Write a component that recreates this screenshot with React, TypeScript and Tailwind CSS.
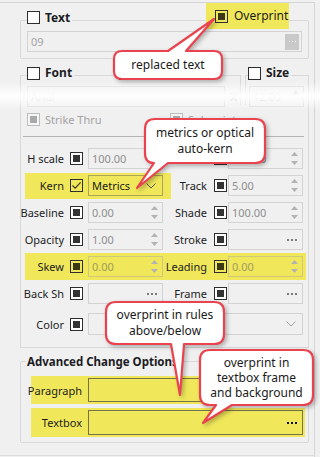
import React from 'react';

type CkKind = 'empty' | 'ind' | 'check' | 'off';

function Ck({ kind = 'ind', yellow = false }: { kind?: CkKind; yellow?: boolean }) {
  if (kind === 'off') {
    return (
      <span className="w-[13px] h-[13px] shrink-0 border border-[#bdbdbd] bg-[#f6f6f6] flex items-center justify-center">
        <span className="w-[7px] h-[7px] bg-[#a9a9a9]" />
      </span>
    );
  }
  return (
    <span
      className={`w-[13px] h-[13px] shrink-0 border border-[#2e2e2e] flex items-center justify-center ${
        yellow ? 'bg-[#f0e85a]' : 'bg-white'
      }`}
    >
      {kind === 'ind' && <span className={`w-[7px] h-[7px] ${yellow ? 'bg-[#3b3817]' : 'bg-[#333333]'}`} />}
      {kind === 'check' && (
        <svg width="11" height="11" viewBox="0 0 11 11">
          <path d="M1.5 5.5 L4.2 8.2 L9.6 2.4" stroke="#3a3714" strokeWidth="1.2" fill="none" />
        </svg>
      )}
    </span>
  );
}

function Spin() {
  return (
    <span className="ml-auto mr-[4px] flex flex-col gap-[5px]">
      <svg width="7" height="4" viewBox="0 0 7 4">
        <path d="M0 4 L3.5 0 L7 4 Z" fill="#b3b3b3" />
      </svg>
      <svg width="7" height="4" viewBox="0 0 7 4">
        <path d="M0 0 L3.5 4 L7 0 Z" fill="#b3b3b3" />
      </svg>
    </span>
  );
}

function Dots({ dark = false }: { dark?: boolean }) {
  const c = dark ? 'bg-[#111111]' : 'bg-[#7a7a7a]';
  return (
    <span className="ml-auto mr-[5px] flex gap-[2px]">
      <span className={`w-[2px] h-[2px] ${c}`} />
      <span className={`w-[2px] h-[2px] ${c}`} />
      <span className={`w-[2px] h-[2px] ${c}`} />
    </span>
  );
}

function Chev({ dark = false }: { dark?: boolean }) {
  return (
    <svg className="ml-auto mr-[6px]" width="10" height="6" viewBox="0 0 10 6">
      <path d="M0.5 0.5 L5 5 L9.5 0.5" stroke={dark ? '#555' : '#a5a5a5'} strokeWidth="1" fill="none" />
    </svg>
  );
}

// right aligned label; long words spill to the left like the WinForms labels
function Lbl({ w, children }: { w: string; children: React.ReactNode }) {
  return <span className={`${w} shrink-0 flex justify-end whitespace-nowrap leading-none`}>{children}</span>;
}

type FieldProps = {
  value?: string;
  w: string;
  h?: string;
  yellow?: boolean;
  spin?: boolean;
  dots?: boolean;
  chev?: boolean;
};

function Field({ value, w, h = 'h-[21px]', yellow = false, spin, dots, chev }: FieldProps) {
  return (
    <div
      className={`${w} ${h} shrink-0 border flex items-center pl-[3px] ${
        yellow ? 'border-[#cfc87c] bg-[#f0e85a] text-[#a19b5e]' : 'border-[#d3d3d3] bg-[#f0f0f0] text-[#8e8e8e]'
      }`}
    >
      <span className="leading-none">{value}</span>
      {spin && <Spin />}
      {dots && <Dots />}
      {chev && <Chev />}
    </div>
  );
}

type Side = { label: string; value?: string; spin?: boolean; dots?: boolean };

function Row({ l, r, hl }: { l: Side; r: Side; hl?: boolean }) {
  return (
    <div className={`ml-[4px] w-[281px] h-[27px] flex items-center ${hl ? 'bg-[#f0e85a]' : ''}`}>
      <div className="w-[146px] flex items-center">
        <Lbl w="w-[39px]">{l.label}</Lbl>
        <span className="ml-[6px]">
          <Ck yellow={hl} />
        </span>
        <span className="ml-[5px]">
          <Field w="w-[75px]" value={l.value} spin={l.spin} dots={l.dots} yellow={hl} />
        </span>
      </div>
      <div className="flex items-center">
        <Lbl w="w-[36px]">{r.label}</Lbl>
        <span className="ml-[7px]">
          <Ck yellow={hl} />
        </span>
        <span className="ml-[1px]">
          <Field w="w-[75px]" value={r.value} spin={r.spin} dots={r.dots} yellow={hl} />
        </span>
      </div>
    </div>
  );
}

export default function App() {
  return (
    <div className="relative w-[320px] h-[457px] overflow-hidden bg-[#f0f0f0] font-['Noto_Sans',sans-serif] text-[11px] text-[#1c1c24]">
      <div className="mt-[2px] w-[315px] h-[460px] border-t border-r border-[#d6d6d6] flex flex-col">
        {/* Text group */}
        <div className="ml-[20px] mt-[17px] w-[289px] h-[39px] shrink-0 border border-[#d9d9d9] rounded-[2px]">
          <div className="-mt-[18px] h-[26px] flex items-center">
            <div className="ml-[6px] mt-[3px] pr-[2px] flex items-center gap-[5px] bg-[#f0f0f0]">
              <Ck kind="empty" />
              <span className="font-bold leading-none text-[12px]">Text</span>
            </div>
            <div className="ml-auto mr-[19px] w-[83px] h-[26px] bg-[#f0e85a] flex items-center pl-[9px] gap-[6px]">
              <Ck yellow />
              <span className="leading-none text-[12px]">Overprint</span>
            </div>
          </div>
          <div className="ml-[6px] mt-[2px] w-[275px] h-[21px] border border-[#d3d3d3] bg-[#f0f0f0] flex items-center pl-[3px] text-[#a3a3a3]">
            <span className="leading-none">09</span>
            <span className="ml-auto mr-[2px] w-[14px] h-[16px] bg-[#c9c9c9] flex items-center justify-center gap-[2px]">
              <span className="w-[1px] h-[1px] bg-[#f4f4f4]" />
              <span className="w-[1px] h-[1px] bg-[#f4f4f4]" />
              <span className="w-[1px] h-[1px] bg-[#f4f4f4]" />
            </span>
          </div>
        </div>

        {/* Font / Size groups */}
        <div className="mt-[16px] ml-[20px] flex shrink-0">
          <div className="w-[221px] h-[30px] border-t border-x border-[#d9d9d9]">
            <div className="-mt-[10px] h-[14px] flex items-center">
              <div className="ml-[6px] pr-[2px] flex items-center gap-[5px] bg-[#f0f0f0]">
                <Ck kind="empty" />
                <span className="font-bold leading-none text-[12px]">Font</span>
              </div>
              <div className="ml-[45px] pr-[4px] flex items-center bg-[#f0f0f0]">
                <Ck kind="empty" />
              </div>
            </div>
            <div className="mt-[6px] flex items-center">
              <div className="ml-[6px] w-[198px] h-[21px] border border-[#dadada] bg-[#f0f0f0] flex items-center pl-[3px] text-[#c4c4c4]">
                <span className="leading-none">Arial</span>
              </div>
              <span className="ml-[5px] font-bold text-[#b8b8b8] leading-none">X</span>
            </div>
          </div>
          <div className="ml-[4px] w-[64px] h-[30px] border-t border-x border-[#d9d9d9]">
            <div className="-mt-[10px] h-[14px] flex items-center">
              <div className="ml-[2px] pr-[2px] flex items-center gap-[5px] bg-[#f0f0f0]">
                <Ck kind="empty" />
                <span className="font-bold leading-none text-[12px]">Size</span>
              </div>
            </div>
            <div className="mt-[6px] ml-[3px] w-[55px] h-[21px] border border-[#dadada] bg-[#f0f0f0] flex items-center pl-[3px] text-[#c4c4c4]">
              <span className="leading-none">12.00</span>
              <svg className="ml-auto mr-[4px] -mt-[8px]" width="7" height="4" viewBox="0 0 7 4">
                <path d="M0 4 L3.5 0 L7 4 Z" fill="#b3b3b3" />
              </svg>
            </div>
          </div>
        </div>

        {/* Character options group */}
        <div className="ml-[20px] w-[289px] h-[243px] shrink-0 border-x border-b border-[#d9d9d9]">
          <div className="mt-[5px] h-[18px] flex items-center text-[#a2a2a2]">
            <div className="ml-[6px] w-[143px] flex items-center gap-[5px]">
              <Ck kind="off" />
              <span className="leading-none">Strike Thru</span>
            </div>
            <div className="flex items-center gap-[5px]">
              <Ck kind="off" />
              <span className="leading-none">Subscript</span>
            </div>
          </div>
          <div className="mt-[8px] ml-[2px] w-[281px] h-[1px] bg-[#b5b5b5]" />
          <div className="mt-[8px] flex flex-col">
            <Row l={{ label: 'H scale', value: '100.00', spin: true }} r={{ label: '', value: '100.00', spin: true }} />
            <div className="ml-[4px] w-[281px] h-[27px] flex items-center">
              <div className="w-[146px] h-[26px] flex items-center bg-[#f0e85a]">
                <Lbl w="w-[39px]">Kern</Lbl>
                <span className="ml-[6px]">
                  <Ck kind="check" yellow />
                </span>
                <div className="ml-[5px] w-[75px] h-[21px] border border-[#aba45c] flex items-center pl-[3px] text-[#1a1a1a]">
                  <span className="leading-none">Metrics</span>
                  <Chev dark />
                </div>
              </div>
              <div className="flex items-center">
                <Lbl w="w-[36px]">Track</Lbl>
                <span className="ml-[7px]">
                  <Ck />
                </span>
                <span className="ml-[1px]">
                  <Field w="w-[75px]" value="5.00" spin />
                </span>
              </div>
            </div>
            <Row l={{ label: 'Baseline', value: '0.00', spin: true }} r={{ label: 'Shade', value: '100.00', spin: true }} />
            <Row l={{ label: 'Opacity', value: '1.00', spin: true }} r={{ label: 'Stroke', dots: true }} />
            <Row hl l={{ label: 'Skew', value: '0.00', spin: true }} r={{ label: 'Leading', value: '0.00', spin: true }} />
            <Row l={{ label: 'Back Sh', dots: true }} r={{ label: 'Frame', dots: true }} />
            <div className="ml-[4px] h-[34px] flex items-center">
              <Lbl w="w-[39px]">Color</Lbl>
              <span className="ml-[6px]">
                <Ck />
              </span>
              <span className="ml-[5px]">
                <Field w="w-[215px]" h="h-[22px]" chev />
              </span>
            </div>
          </div>
        </div>

        {/* Advanced Change Options */}
        <div className="mt-[13px] ml-[20px] w-[289px] h-[82px] shrink-0 border border-[#d9d9d9] rounded-[2px]">
          <div className="-mt-[9px] h-[17px] flex items-center">
            <span className="ml-[5px] px-[1px] bg-[#f0f0f0] font-bold text-[11.5px] leading-none">Advanced Change Options</span>
          </div>
          <div className="mt-[6px] ml-[10px] w-[274px] h-[28px] bg-[#f0e85a] flex items-center">
            <Lbl w="w-[51px]">Paragraph</Lbl>
            <div className="ml-[6px] w-[215px] h-[24px] border border-[#77734a]" />
          </div>
          <div className="mt-[4px] ml-[10px] w-[274px] h-[29px] bg-[#f0e85a] flex items-center">
            <Lbl w="w-[51px]">Textbox</Lbl>
            <div className="ml-[6px] w-[215px] h-[25px] border border-[#77734a] flex items-center">
              <Dots dark />
            </div>
          </div>
        </div>
        <div className="mt-[12px] w-[315px] h-[1px] bg-[#dcdcdc]" />
      </div>

      {/* torn / faded band */}
      <div className="absolute left-0 top-[82px] w-[320px] h-[28px] bg-linear-to-b from-transparent via-white to-transparent" />

      {/* callouts */}
      <svg className="absolute left-0 top-0 pointer-events-none drop-shadow-[2px_2px_2px_rgba(0,0,0,0.28)]" width="320" height="457" viewBox="0 0 320 457">
        <g fill="#ffffff" stroke="#e8434e" strokeWidth="2.2" strokeLinejoin="round">
          <path d="M122 51 L168 51 L214 19 L186 51 L214 51 Q222 51 222 59 L222 71 Q222 79 214 79 L122 79 Q114 79 114 71 L114 59 Q114 51 122 51 Z" />
          <path d="M155 119 L255 119 Q265 119 265 129 L265 153 Q265 163 255 163 L168 163 L137 188 L154 163 Q145 163 145 153 L145 129 Q145 119 155 119 Z" />
          <path d="M116 302 L214 302 Q224 302 224 312 L224 334 Q224 344 214 344 L184 344 L180 395 L171 344 L116 344 Q106 344 106 334 L106 312 Q106 302 116 302 Z" />
          <path d="M210 350 L303 350 Q313 350 313 360 L313 395 Q313 405 303 405 L232 405 L203 423 L216 405 L210 405 Q200 405 200 395 L200 360 Q200 350 210 350 Z" />
        </g>
      </svg>
      <div className="absolute left-[114px] top-[51px] w-[108px] h-[28px] flex items-center justify-center text-[12px] text-[#1a1a1a] leading-none">
        replaced text
      </div>
      <div className="absolute left-[145px] top-[119px] w-[120px] h-[44px] flex flex-col items-center justify-center text-[12px] text-[#1a1a1a] leading-[16px]">
        <span>metrics or optical</span>
        <span>auto-kern</span>
      </div>
      <div className="absolute left-[106px] top-[302px] w-[118px] h-[42px] flex flex-col items-center justify-center text-[12px] text-[#1a1a1a] leading-[16px]">
        <span>overprint in rules</span>
        <span>above/below</span>
      </div>
      <div className="absolute left-[200px] top-[350px] w-[113px] h-[55px] flex flex-col items-center justify-center text-[12px] text-[#1a1a1a] leading-[15px]">
        <span>overprint in</span>
        <span>textbox frame</span>
        <span>and background</span>
      </div>
    </div>
  );
}
